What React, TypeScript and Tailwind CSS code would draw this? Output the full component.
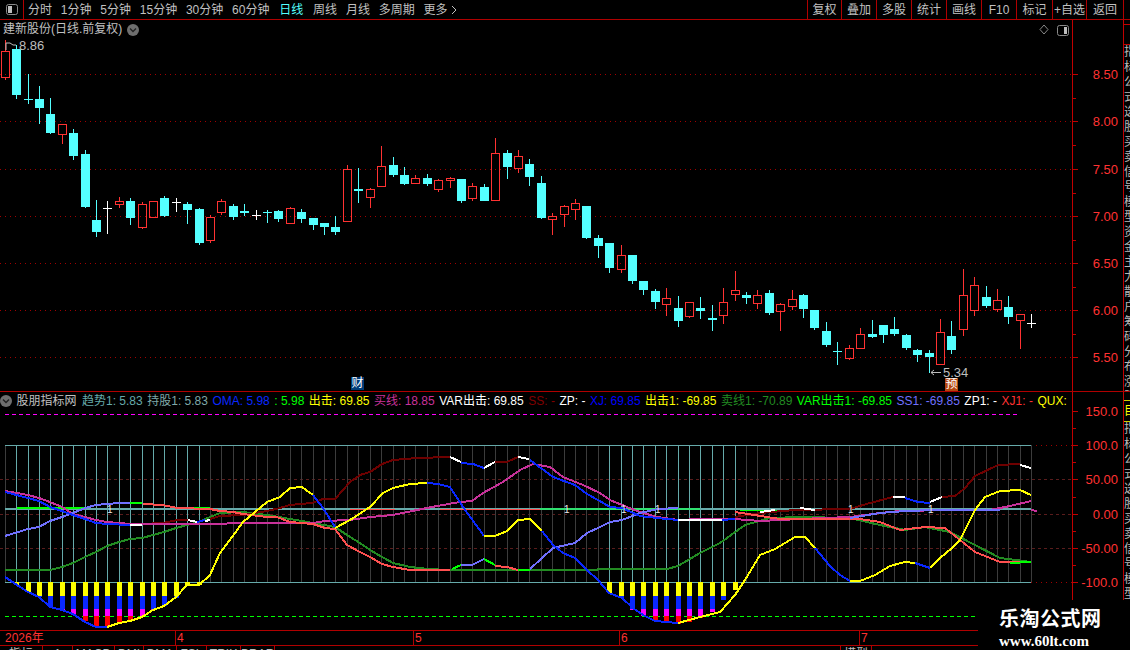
import React from "react";

type Candle = [number, number, number, number, number, "c" | "r" | "w"];

// x, high, top, bottom, low, kind (page pixels)
const candles: Candle[] = [
  [5.5, 40, 51, 77, 80, "r"], [16.5, 45, 49, 95, 99, "c"], [28.5, 74, 99, 100, 104, "c"], [39.5, 86, 99, 108, 124, "c"],
  [50.5, 98, 114, 133, 134, "c"], [62.5, 124, 124, 134, 144, "r"], [73.5, 129, 133, 156, 160, "c"], [85.5, 150, 154, 207, 208, "c"],
  [96.5, 200, 220, 232, 237, "c"], [107.5, 201, 208, 209, 234, "w"], [119.5, 197, 201, 204, 208, "r"], [130.5, 198, 201, 218, 225, "c"],
  [142.5, 202, 204, 227, 229, "r"], [153.5, 201, 201, 217, 217, "r"], [164.5, 196, 198, 216, 217, "c"], [176.5, 198, 202, 203, 212, "w"],
  [187.5, 202, 204, 210, 224, "c"], [199.5, 208, 209, 243, 245, "c"], [210.5, 215, 217, 240, 243, "r"], [221.5, 199, 201, 212, 215, "r"],
  [233.5, 204, 206, 217, 220, "c"], [244.5, 204, 211, 213, 216, "c"], [256.5, 210, 215, 216, 220, "w"], [267.5, 210, 212, 213, 223, "c"],
  [278.5, 210, 211, 219, 222, "c"], [290.5, 207, 208, 223, 223, "r"], [301.5, 209, 212, 219, 223, "c"], [313.5, 218, 218, 225, 230, "c"],
  [324.5, 223, 223, 227, 235, "c"], [335.5, 216, 227, 232, 235, "c"], [347.5, 165, 169, 221, 221, "r"], [358.5, 168, 189, 191, 203, "c"],
  [370.5, 188, 189, 197, 208, "r"], [381.5, 146, 166, 186, 186, "r"], [393.5, 157, 165, 175, 177, "c"], [404.5, 167, 175, 184, 185, "c"],
  [415.5, 175, 178, 183, 184, "r"], [427.5, 174, 178, 184, 186, "c"], [438.5, 179, 180, 189, 192, "r"], [450.5, 177, 178, 180, 188, "r"],
  [461.5, 179, 179, 201, 203, "c"], [472.5, 183, 186, 198, 201, "r"], [484.5, 184, 187, 201, 201, "c"], [495.5, 138, 153, 200, 201, "r"],
  [507.5, 150, 153, 167, 179, "c"], [518.5, 150, 156, 168, 173, "r"], [529.5, 159, 164, 177, 186, "c"], [541.5, 176, 183, 218, 219, "c"],
  [552.5, 213, 216, 219, 235, "r"], [564.5, 205, 206, 214, 227, "r"], [575.5, 199, 203, 209, 220, "r"], [586.5, 206, 206, 238, 239, "c"],
  [598.5, 235, 238, 246, 258, "c"], [609.5, 243, 243, 268, 273, "c"], [621.5, 245, 255, 269, 273, "r"], [632.5, 255, 255, 281, 284, "c"],
  [643.5, 281, 281, 290, 295, "c"], [655.5, 289, 291, 302, 309, "c"], [666.5, 288, 298, 304, 316, "r"], [678.5, 296, 308, 321, 327, "c"],
  [689.5, 302, 302, 316, 318, "r"], [700.5, 297, 308, 311, 319, "c"], [712.5, 305, 318, 320, 331, "c"], [723.5, 288, 302, 315, 324, "r"],
  [735.5, 271, 290, 294, 301, "r"], [746.5, 292, 295, 298, 304, "c"], [757.5, 290, 295, 303, 309, "r"], [769.5, 290, 293, 313, 315, "c"],
  [780.5, 303, 304, 311, 331, "r"], [792.5, 290, 299, 306, 310, "r"], [803.5, 294, 295, 309, 318, "c"], [814.5, 310, 310, 328, 330, "c"],
  [826.5, 322, 331, 345, 347, "c"], [837.5, 342, 351, 352, 365, "c"], [849.5, 345, 348, 358, 360, "r"], [860.5, 328, 334, 348, 348, "r"],
  [872.5, 320, 334, 337, 338, "c"], [883.5, 325, 325, 335, 343, "c"], [894.5, 317, 329, 334, 336, "c"], [906.5, 334, 335, 348, 350, "c"],
  [917.5, 349, 350, 355, 362, "c"], [929.5, 350, 353, 357, 373, "c"], [940.5, 319, 332, 364, 365, "r"], [951.5, 321, 336, 350, 354, "c"],
  [963.5, 269, 295, 329, 336, "r"], [974.5, 277, 285, 310, 316, "r"], [986.5, 286, 297, 306, 308, "c"], [997.5, 289, 300, 309, 312, "r"],
  [1008.5, 296, 307, 317, 324, "c"], [1020.5, 314, 314, 320, 349, "r"], [1031.5, 314, 323, 324, 328, "w"],
];

const DRED = "#6e0000";
const PINK = "#c8329a";
const DGREEN = "#228b22";
const CORAL = "#ff5050";
const PERI = "#7070ff";
const BLUE = "#0a28ff";
const YEL = "#ffff00";
const GRN = "#00ff00";
const WHT = "#ffffff";

const segments: [string, string][] = [
  [DGREEN, "5,570 50,570 62,567 73,563 85,557 96,552 107,546 119,542 130,539 142,538 153,535 164,532 176,528 187,525 199,522 210,517 220,513 243,512 267,515 290,519 313,523 335,527 350,537 360,543 370,550 382,557 393,563 410,567 428,569 450,570 597,570 598,569 667,569 678,566 700,553 720,543 745,525 770,518 800,517 850,518 880,525 905,530 925,527 950,532 975,545 1000,558 1031,562"],
  [DRED, "142,524 163,523 177,520 188,520"],
  [DRED, "210,519 220,516 243,515 267,511 280,508 290,505 312,503 323,499 335,499 350,482 360,475 370,472 382,464 393,460 417,458 450,457"],
  [DRED, "495,462 507,462 518,457"],
  [DRED, "735,517 760,513 795,510 850,509 870,503 893,497"],
  [DRED, "942,497 955,496 965,488 975,476 998,465 1020,464"],
  [PINK, "5,491 17,493 28,495 39,498 50,502 62,507 73,514 85,517 96,520 107,522 119,523 130,524 142,524 313,523 325,521 350,520 370,517 393,515 417,510 437,506 460,502 472,501 483,493 503,482 520,470 533,464 550,467 563,477 583,485 600,493 610,500 627,507 640,512 657,517 678,520 700,519 735,519 760,521 800,519 850,517 880,513 900,511 950,510 990,510 1010,506 1031,501"],
  [PINK, "1031,510 1037,511"],
  [CORAL, "143,504 163,505 177,508 210,509 220,511 233,512 243,514 267,517 277,517 290,522 313,524 325,528 335,529 347,545 360,552 370,557 382,564 393,567 410,570 450,570"],
  [CORAL, "495,566 507,567 518,570"],
  [CORAL, "735,512 780,519 860,519 880,522 900,530 925,527 945,528 960,540 975,552 1000,562 1031,562"],
  [PERI, "5,536 28,529 39,527 50,521 62,517 73,513 85,508 96,505 107,504 119,503 130,503"],
  [PERI, "461,565 472,565 484,559"],
  [PERI, "530,569 553,548 575,543 587,533 598,528 610,522 622,520 640,513 658,509 678,508"],
  [PERI, "850,518 880,513 905,511 935,510 1000,510"],
  [GRN, "130,503 142,503"],
  [GRN, "452,569 461,565"],
  [GRN, "484,559 495,565"],
  [GRN, "518,570 530,570"],
  [GRN, "1010,563 1031,562"],
  [BLUE, "5,492 28,498 39,501 50,507 62,511 73,515 85,519 96,523 107,524 130,525"],
  [BLUE, "197,522 205,520"],
  [BLUE, "461,463 473,464 484,468"],
  [BLUE, "530,460 553,477 575,485 587,494 598,500 610,507 622,508 640,516 657,518 678,520"],
  [BLUE, "722,520 735,519"],
  [BLUE, "905,498 918,502 930,503"],
  [WHT, "130,525 142,525"],
  [WHT, "188,520 197,522"],
  [WHT, "205,521 210,520"],
  [WHT, "450,457 461,462"],
  [WHT, "484,468 495,462"],
  [WHT, "518,457 529,459"],
  [WHT, "678,520 722,520"],
  [WHT, "760,512 775,510"],
  [WHT, "800,508 815,510"],
  [WHT, "893,497 905,497"],
  [WHT, "930,502 942,497"],
  [WHT, "1020,465 1031,468"],
  [BLUE, "5,577 17,585 28,592 39,597 50,607 62,610 73,614 85,622 96,627 107,627"],
  [YEL, "107,627 119,623 130,621 142,617 153,610 164,606 176,597 187,585 199,585 210,575 220,553 232,537 243,522 255,512 267,502 280,497 290,488 302,487 313,495"],
  [BLUE, "313,495 323,508 335,527"],
  [YEL, "335,528 350,520 370,507 383,493 393,488 410,484 427,483"],
  [BLUE, "427,483 438,484 450,487 463,507 484,536"],
  [YEL, "484,536 495,536 507,531 518,520 530,519 542,531"],
  [BLUE, "542,531 553,545 563,553 575,558 587,570 598,580 609,593 622,598 633,608 643,615 655,621 678,623"],
  [YEL, "678,623 700,617 720,612 735,595 745,580 760,555 775,549 795,537 805,537 815,548"],
  [BLUE, "815,548 830,566 840,575 850,581"],
  [YEL, "850,581 860,581 875,575 890,566 905,562 915,563"],
  [BLUE, "915,563 930,568"],
  [YEL, "930,568 940,558 952,548 960,540 975,510 985,497 1000,491 1020,490 1031,495"],
];

// histogram: bar x and lowest y
const bars: [number, number][] = [
  [16.5, 585], [28.5, 592], [39.5, 597], [50.5, 607], [62.5, 610], [73.5, 615], [85.5, 621], [96.5, 627], [107.5, 627],
  [119.5, 623], [130.5, 621], [142.5, 617], [153.5, 610], [164.5, 606], [176.5, 598], [187.5, 585], [199.5, 585],
  [609.5, 593], [621.5, 598], [632.5, 610], [643.5, 616], [655.5, 621], [666.5, 622], [678.5, 624], [689.5, 622],
  [700.5, 618], [712.5, 612], [723.5, 600], [735.5, 590],
];

const bands: [string, number, number][] = [
  [YEL, 582, 596],
  [BLUE, 596, 609],
  ["#ff00ff", 609, 616],
  ["#ff0000", 616, 640],
];

const legend: [string, string][] = [
  ["趋势1: 5.83", "#66aaaa"], ["持股1: 5.83", "#7fa8a8"], ["OMA: 5.98", "#0a28ff"], [": 5.98", "#00ff00"],
  ["出击: 69.85", "#ffff00"], ["买线: 18.85", "#c8329a"], ["VAR出击: 69.85", "#ffffff"], ["SS: -", "#800000"],
  ["ZP: -", "#ffffff"], ["XJ: 69.85", "#0000ff"], ["出击1: -69.85", "#ffff00"], ["卖线1: -70.89", "#228b22"],
  ["VAR出击1: -69.85", "#00ff00"], ["SS1: -69.85", "#7070ff"], ["ZP1: -", "#ffffff"], ["XJ1: -", "#ff3232"], ["QUX:", "#ffff00"],
];

const periods = ["分时", "1分钟", "5分钟", "15分钟", "30分钟", "60分钟", "日线", "周线", "月线", "多周期"];
const tools: [string, string][] = [
  ["复权", "w-[34px]"], ["叠加", "w-[35px]"], ["多股", "w-[35px]"], ["统计", "w-[35px]"], ["画线", "w-[35px]"],
  ["F10", "w-[35px]"], ["标记", "w-[36px]"], ["+自选", "w-[34px]"], ["返回", "w-[37px]"],
];
const priceLabels: [string, number][] = [["8.50", 74.5], ["8.00", 121.5], ["7.50", 169.5], ["7.00", 216.5], ["6.50", 263.5], ["6.00", 310.5], ["5.50", 357.5]];
const subLabels: [string, number][] = [["150.0", 411.5], ["100.0", 445.5], ["50.00", 479.5], ["0.00", 514.5], ["-50.00", 548.5], ["-100.0", 582.5]];
const months: [string, string][] = [["4", "w-[238px]"], ["5", "w-[206px]"], ["6", "w-[240px]"], ["7", "w-[119px]"]];
const bottomTabs: [string, string][] = [["指标", "w-[43px]"], ["1", "w-[30px]"], ["MACD", "w-[42px]"], ["DMI", "w-[29px]"], ["DMA", "w-[33px]"], ["FSL", "w-[30px]"], ["TRIX", "w-[34px]"], ["BRAR", "w-[34px]"]];
const sideChars = "指标公式选股买卖信号模型资金主力散户筹码分布涨跌".split("");
const subVerticals = candles.map((c) => c[0]);

const isTeal = (x: number) => (x > 10 && x < 205) || (x > 605 && x < 740);

const Chevron = () => (
  <svg width="12" height="12" viewBox="0 0 12 12" className="shrink-0">
    <circle cx="6" cy="6" r="6" fill="#6e6e6e" />
    <path d="M3 4.5 L6 7.5 L9 4.5" fill="none" stroke="#222" strokeWidth="1.4" />
  </svg>
);

const PanelIcon = ({ flip }: { flip?: boolean }) => (
  <svg width="12" height="11" viewBox="0 0 12 11" className="shrink-0">
    <rect x="0.5" y="0.5" width="11" height="10" rx="2" fill="#000" stroke="#8a8a8a" />
    {flip ? <rect x="7" y="2" width="3" height="7" fill="#bdbdbd" /> : <rect x="2" y="2" width="4" height="7" fill="#bdbdbd" />}
  </svg>
);

const MainChart = () => (
  <svg width="1072" height="372" viewBox="0 20 1072 372" className="absolute inset-0">
    {priceLabels.map(([l, y]) => (
      <line key={l} x1="0" x2="1072" y1={y} y2={y} stroke="#a00000" strokeDasharray="1 4" shapeRendering="crispEdges" />
    ))}
    <g shapeRendering="crispEdges">
      {candles.map(([x, hi, top, bot, lo, kind]) => {
        if (kind === "c")
          return (
            <g key={x}>
              <line x1={x} x2={x} y1={hi} y2={lo} stroke="#54ffff" />
              <rect x={x - 4.5} y={top} width="9" height={Math.max(bot - top, 1)} fill="#54ffff" />
            </g>
          );
        if (kind === "w")
          return (
            <g key={x}>
              <line x1={x} x2={x} y1={hi} y2={lo} stroke="#fff" />
              <rect x={x - 4.5} y={top} width="9" height="1" fill="#fff" />
            </g>
          );
        return (
          <g key={x} stroke="#ff3232" fill="none">
            <line x1={x} x2={x} y1={hi} y2={top} />
            <line x1={x} x2={x} y1={bot} y2={lo} />
            <rect x={x - 4} y={top + 0.5} width="8" height={bot - top} />
          </g>
        );
      })}
    </g>
    <path d="M6 50 V43 H10 L13 45 H16" fill="none" stroke="#bdbdbd" />
    <path d="M941 372.5 H931 M934 370 L931 372.5 L934 375" fill="none" stroke="#bdbdbd" />
    <text x="19" y="50" fontSize="13" fill="#bdbdbd">8.86</text>
    <text x="943" y="377" fontSize="13" fill="#bdbdbd">5.34</text>
    <path d="M1044 25 L1048 29.5 L1044 34 L1040 29.5 Z" fill="none" stroke="#8a8a8a" />
  </svg>
);

const SubChart = () => (
  <svg width="1072" height="238" viewBox="0 392 1072 238" className="absolute inset-0">
    <g shapeRendering="crispEdges">
      <line x1="5" x2="1020" y1="414" y2="414" stroke="#ff00ff" strokeDasharray="4 3" />
      {[479.5, 514.5, 548.5].map((y) => (
        <line key={y} x1="0" x2="1072" y1={y} y2={y} stroke="#5a1c1c" strokeDasharray="3 3" />
      ))}
      <line x1="1031" x2="1072" y1="445.5" y2="445.5" stroke="#a00000" strokeDasharray="1 4" />
      <line x1="1031" x2="1072" y1="582.5" y2="582.5" stroke="#a00000" strokeDasharray="1 4" />
      {subVerticals.map((x) => (
        <line key={x} x1={x} x2={x} y1="445" y2="582" stroke={isTeal(x) ? "#66aaaa" : "#3c3c3c"} />
      ))}
      <line x1="5" x2="1031" y1="445.5" y2="445.5" stroke="#66aaaa" />
      <line x1="5" x2="1031" y1="582.5" y2="582.5" stroke="#66aaaa" />
      <line x1="5" x2="978" y1="616.5" y2="616.5" stroke="#00ff00" strokeDasharray="4 3" />
      <line x1="5" x2="1031" y1="509" y2="509" stroke="#66aaaa" strokeWidth="2" />
      <line x1="17" x2="85" y1="508" y2="508" stroke="#00ff00" strokeWidth="2" />
      <line x1="188" x2="210" y1="508" y2="508" stroke="#00ff00" strokeWidth="2" />
      <line x1="350" x2="395" y1="509" y2="509" stroke="#ff5050" />
      <line x1="440" x2="540" y1="509" y2="509" stroke="#ff5050" />
      <line x1="540" x2="700" y1="509" y2="509" stroke="#30e070" strokeWidth="2" />
      <line x1="740" x2="800" y1="510" y2="510" stroke="#00ff00" />
      {bars.map(([x, bottom]) =>
        bands.map(([color, from, to]) =>
          bottom > from ? (
            <rect key={x + color} x={x - 2.5} y={from} width="5" height={Math.min(bottom, to) - from} fill={color} />
          ) : null,
        ),
      )}
      {segments.map(([color, pts], i) => (
        <polyline key={i} points={pts} fill="none" stroke={color} strokeWidth="2" />
      ))}
    </g>
    {[110, 567, 624, 658, 851, 931].map((x) => (
      <text key={x} x={x - 3} y="513" fontSize="10" fill="#e8e8e8">1</text>
    ))}
  </svg>
);

const ValueAxis = ({ labels, top, height }: { labels: [string, number][]; top: number; height: number }) => {
  const minor = labels.slice(0, -1).map(([, y], i) => (y + labels[i + 1][1]) / 2);
  return (
    <svg width="50" height={height} viewBox={`1073 ${top} 50 ${height}`} className="block">
      <g stroke="#c00000" shapeRendering="crispEdges">
        {labels.map(([l, y]) => (
          <line key={l} x1="1073" x2="1078" y1={y} y2={y} />
        ))}
        {minor.map((y) => (
          <line key={y} x1="1073" x2="1076" y1={y} y2={y} />
        ))}
      </g>
      {labels.map(([l, y]) => (
        <text key={l} x="1118" y={y + 4} fontSize="13" textAnchor="end" fill="#ff3232">{l}</text>
      ))}
    </svg>
  );
};

const SideStrip = ({ chars }: { chars: string[] }) => (
  <div className="w-[7px] flex-1 overflow-hidden flex flex-col text-[12px] leading-[15px] text-[#b8b8b8]">
    {chars.map((c, i) => (
      <span key={i} className="w-3 h-[15px] shrink-0">{c}</span>
    ))}
  </div>
);

export default function App() {
  return (
    <div className="relative w-[1130px] h-[650px] overflow-hidden bg-black flex flex-col font-['Liberation_Sans','Noto_Sans_CJK_SC',sans-serif] text-[12px] text-[#c0c0c0]">
      {/* toolbar */}
      <div className="h-5 shrink-0 flex border-b border-[#b00000]">
        <div className="w-6 flex items-center justify-center border-r border-[#b00000]">
          <PanelIcon />
        </div>
        <div className="flex items-center gap-[8.8px] pl-1">
          {periods.map((p) => (
            <span key={p} className={p === "日线" ? "text-[#54ffff] mx-px" : ""}>{p}</span>
          ))}
          <span className="flex items-center gap-[3px]">
            更多
            <svg width="6" height="10" viewBox="0 0 6 10">
              <path d="M1 1 L5 5 L1 9" fill="none" stroke="#c0c0c0" />
            </svg>
          </span>
        </div>
        <div className="ml-auto flex">
          {tools.map(([t, w]) => (
            <span key={t} className={`${w} border-l border-[#b00000] flex items-center justify-center whitespace-nowrap`}>{t}</span>
          ))}
          <span className="w-[7px] border-l border-[#b00000]" />
        </div>
      </div>

      {/* kline panel */}
      <div className="h-[372px] shrink-0 flex border-b border-[#b00000]">
        <div className="relative w-[1072px] shrink-0">
          <MainChart />
          <div className="absolute left-[3px] top-[2px] flex items-center gap-[5px] leading-[15px]">
            <span>建新股份(日线.前复权)</span>
            <Chevron />
          </div>
          <div className="absolute left-[1057px] top-[5px]">
            <PanelIcon flip />
          </div>
          <span className="absolute left-[351px] top-[357px] w-[13px] h-[13px] bg-[#003c78] text-white text-[12px] leading-[13px] text-center">财</span>
          <span className="absolute left-[945px] top-[358px] w-[13px] h-[13px] bg-[#b4460f] text-white text-[12px] leading-[13px] text-center">预</span>
        </div>
        <div className="border-l border-[#c00000]">
          <ValueAxis labels={priceLabels} top={20} height={371} />
        </div>
        <div className="flex flex-col border-l border-[#c00000] overflow-hidden">
          <div className="h-[5px] border-b border-[#c00000]" />
          <div className="h-5 border-b border-[#c00000]" />
          <SideStrip chars={sideChars} />
        </div>
      </div>

      {/* indicator panel */}
      <div className="h-[238px] shrink-0 flex">
        <div className="relative w-[1072px] shrink-0">
          <SubChart />
          <div className="absolute left-0 top-[1px] flex items-center gap-[4.5px] whitespace-nowrap leading-[16px]">
            <Chevron />
            <span className="mr-[1px]">股朋指标网</span>
            {legend.map(([t, color]) => (
              <span key={t} style={{ color }}>{t}</span>
            ))}
          </div>
        </div>
        <div className="border-l border-[#c00000]">
          <ValueAxis labels={subLabels} top={392} height={238} />
        </div>
        <div className="flex flex-col border-l border-[#c00000] overflow-hidden">
          <div className="h-2" />
          <div className="h-[22px] border-y border-[#d0d000] text-[#ffff00] w-[7px] overflow-hidden leading-[20px]">
            <span className="block w-3">目</span>
          </div>
          <SideStrip chars={sideChars} />
        </div>
      </div>

      {/* date strip */}
      <div className="h-4 shrink-0 w-[978px] flex border-y border-[#b00000] text-[#ff3232] leading-[14px]">
        <span className="w-[175px] pl-[5px]">2026年</span>
        {months.map(([m, w]) => (
          <span key={m} className={`${w} border-l border-[#b00000] pl-[1px]`}>{m}</span>
        ))}
      </div>

      {/* bottom tabs, cut off by the window */}
      <div className="flex-1 flex overflow-hidden leading-[17px]">
        {bottomTabs.map(([t, w]) => (
          <span key={t} className={`${w} border-r border-[#b00000] text-center`}>{t}</span>
        ))}
        <span className="ml-[565px] w-[32px] border-x border-[#b00000] text-center">模型</span>
      </div>

      {/* site watermark */}
      <div className="absolute right-0 bottom-0 w-[152px] h-[50px] bg-black flex flex-col items-start pt-2 pl-[21px] text-white font-bold font-['Liberation_Serif','Noto_Sans_CJK_SC',serif]">
        <span className="text-[20px] leading-[22px] tracking-[0.5px]">乐淘公式网</span>
        <span className="text-[15px] leading-[16px] mt-[3px]">www.60lt.com</span>
      </div>
    </div>
  );
}
